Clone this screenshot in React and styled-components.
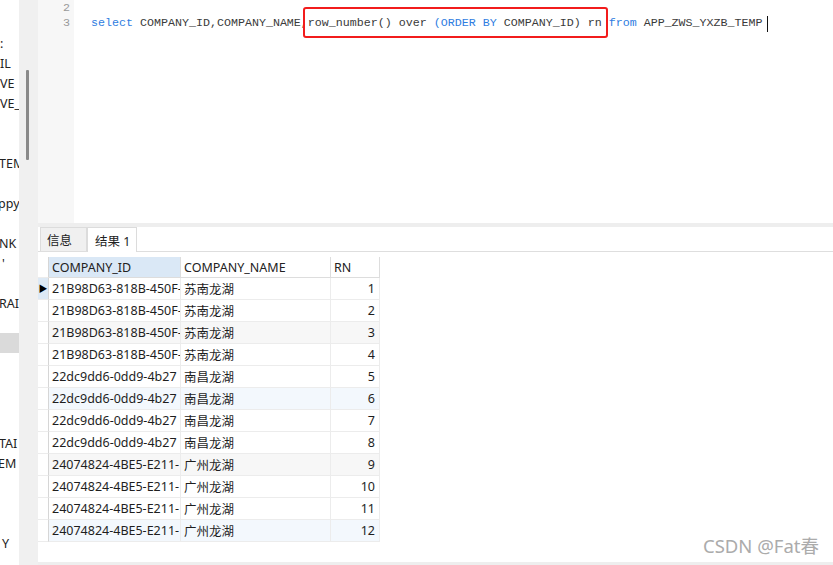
import React from 'react'
import styled, { createGlobalStyle } from 'styled-components'

const GlobalStyle = createGlobalStyle`
  html, body {
    margin: 0;
    padding: 0;
    background: #ffffff;
    overflow: hidden;
  }
  * { box-sizing: border-box; }
`

const UI_FONT = `"Noto Sans", "Noto Sans CJK SC", sans-serif`
const CODE_FONT = `"Liberation Mono", "DejaVu Sans Mono", monospace`

const Pantalla = styled.div`
  width: 833px;
  height: 565px;
  display: flex;
  position: relative;
  font-family: ${UI_FONT};
  color: #222;
  overflow: hidden;
`

const Sidebar = styled.ul`
  width: 19px;
  margin: 0;
  padding: 33px 0 0;
  list-style: none;
  overflow: hidden;
  background: #fff;
`

const SidebarItem = styled.li`
  height: 20px;
  display: flex;
  align-items: center;
  white-space: nowrap;
  font-size: 12.5px;
  color: #222;
  background: ${p => (p.$activo ? '#dadada' : 'transparent')};
`

const Fragmento = styled.span`
  margin-left: ${p => p.$desfase || 0}px;
`

const Separador = styled.div`
  width: 19px;
  background: #f0f0f0;
  padding: 70px 0 0 7px;
`

const ScrollThumb = styled.div`
  width: 3px;
  height: 90px;
  background: #8a8a8a;
  border-radius: 1px;
`

const Principal = styled.div`
  flex: 1;
  display: flex;
  flex-direction: column;
  min-width: 0;
`

const Editor = styled.div`
  height: 223px;
  display: flex;
  background: #fff;
  position: relative;
`

const Gutter = styled.div`
  width: 36px;
  background: #f7f7f7;
  padding: 1px 4px 0 0;
  font-family: ${CODE_FONT};
  font-size: 11.7px;
  line-height: 15px;
  color: #9a9a9a;
`

const Codigo = styled.div`
  flex: 1;
  padding: 1px 0 0 17px;
  font-family: ${CODE_FONT};
  font-size: 11.67px;
  line-height: 15px;
  color: #3a3a3a;
  white-space: pre;
  position: relative;
`

const Linea = styled.div`
  height: 15px;
  display: flex;
  align-items: center;
  justify-content: ${p => (p.$numero ? 'flex-end' : 'flex-start')};
`

const Keyword = styled.span`
  color: #2f7de1;
`

const Cursor = styled.span`
  display: inline-block;
  width: 1px;
  height: 16px;
  background: #111;
  margin-left: 4px;
`

const Resaltado = styled.div`
  position: absolute;
  left: 229px;
  top: 7px;
  width: 305px;
  height: 31px;
  border: 2px solid #f21c1c;
  border-radius: 3px;
  pointer-events: none;
`

const Divisor = styled.div`
  height: 4px;
  background: #eeeeee;
`

const Pestanas = styled.div`
  height: 25px;
  display: flex;
  align-items: flex-end;
  padding-left: 2px;
  border-bottom: 1px solid #dedede;
`

const Pestana = styled.div`
  width: ${p => p.$ancho}px;
  height: ${p => (p.$activa ? 25 : 24)}px;
  display: flex;
  align-items: center;
  padding-left: ${p => (p.$activa ? 7 : 6)}px;
  font-size: 12.5px;
  color: #222;
  background: ${p => (p.$activa ? '#ffffff' : '#f0f0f0')};
  border: 1px solid #dcdcdc;
  border-bottom: none;
  margin-bottom: ${p => (p.$activa ? '-1px' : '0')};
`

const ZonaResultados = styled.div`
  flex: 1;
  padding-top: 5px;
  background: #fff;
  position: relative;
`

const Tabla = styled.div`
  display: grid;
  grid-template-columns: 11px 132px 150px 49px;
  grid-template-rows: 21px;
  grid-auto-rows: 22px;
  width: 342px;
  font-size: 12.5px;
`

const Encabezado = styled.div`
  display: flex;
  align-items: center;
  padding-left: 3px;
  background: ${p => (p.$seleccionada ? '#dae8f6' : '#ffffff')};
  border-right: 1px solid #dddddd;
  border-bottom: 1px solid #dddddd;
  white-space: nowrap;
  overflow: hidden;
`

const Celda = styled.div`
  display: flex;
  align-items: center;
  justify-content: ${p => (p.$numero ? 'flex-end' : 'flex-start')};
  padding: ${p => (p.$numero ? '0 4px 0 0' : '0 0 0 3px')};
  background: ${p => p.$fondo};
  border-right: 1px solid #ececec;
  border-bottom: 1px solid #ececec;
  white-space: nowrap;
  overflow: hidden;
  color: #1e1e1e;
`

const Indicador = styled.div`
  display: flex;
  align-items: center;
  justify-content: center;
  background: ${p => (p.$actual ? '#dde9f5' : '#ffffff')};
  border-right: 1px solid #d6d6d6;
  border-bottom: 1px solid #ececec;
  font-size: 9px;
  color: #000;
`

const BordeInferior = styled.div`
  position: absolute;
  left: 0;
  right: 0;
  bottom: 0;
  height: 3px;
  background: #eeeeee;
`

const MarcaAgua = styled.div`
  position: absolute;
  right: 14px;
  bottom: 7px;
  font-family: ${UI_FONT};
  font-size: 18.5px;
  color: #ababab;
  text-shadow: 0 0 1px #fff;
`

// solo se ve el final de cada nombre: el panel está recortado
const tablasSidebar = [
  { nombre: ':', desfase: 0 },
  { nombre: 'IL', desfase: 0 },
  { nombre: 'VE', desfase: 0 },
  { nombre: 'VE_', desfase: 0 },
  { nombre: '' },
  { nombre: '' },
  { nombre: 'TEM', desfase: -1 },
  { nombre: '' },
  { nombre: 'ppy', desfase: -2 },
  { nombre: '' },
  { nombre: 'NK', desfase: -1 },
  { nombre: "'", desfase: 2 },
  { nombre: '' },
  { nombre: 'RAI', desfase: -1 },
  { nombre: '' },
  { nombre: '', activo: true },
  { nombre: '' },
  { nombre: '' },
  { nombre: '' },
  { nombre: '' },
  { nombre: 'TAI', desfase: -1 },
  { nombre: 'EM', desfase: -2 },
  { nombre: '' },
  { nombre: '' },
  { nombre: '' },
  { nombre: 'Y', desfase: 2 },
]

const filas = [
  { id: '21B98D63-818B-450F-', nombre: '苏南龙湖', rn: 1 },
  { id: '21B98D63-818B-450F-', nombre: '苏南龙湖', rn: 2 },
  { id: '21B98D63-818B-450F-', nombre: '苏南龙湖', rn: 3 },
  { id: '21B98D63-818B-450F-', nombre: '苏南龙湖', rn: 4 },
  { id: '22dc9dd6-0dd9-4b27', nombre: '南昌龙湖', rn: 5 },
  { id: '22dc9dd6-0dd9-4b27', nombre: '南昌龙湖', rn: 6 },
  { id: '22dc9dd6-0dd9-4b27', nombre: '南昌龙湖', rn: 7 },
  { id: '22dc9dd6-0dd9-4b27', nombre: '南昌龙湖', rn: 8 },
  { id: '24074824-4BE5-E211-', nombre: '广州龙湖', rn: 9 },
  { id: '24074824-4BE5-E211-', nombre: '广州龙湖', rn: 10 },
  { id: '24074824-4BE5-E211-', nombre: '广州龙湖', rn: 11 },
  { id: '24074824-4BE5-E211-', nombre: '广州龙湖', rn: 12 },
]

// cada 3 filas hay un fondo alterno: gris y luego azul
const fondoFila = (i) => {
  const n = (i + 1) % 6
  if (n === 3) return '#f7f7f7'
  if (n === 0) return '#f3f8fd'
  return '#ffffff'
}

const App = () => {
  return (
    <>
      <GlobalStyle />
      <Pantalla>
        <Sidebar>
          {tablasSidebar.map((t, i) => (
            <SidebarItem key={i} $activo={t.activo}>
              <Fragmento $desfase={t.desfase}>{t.nombre}</Fragmento>
            </SidebarItem>
          ))}
        </Sidebar>

        <Separador>
          <ScrollThumb />
        </Separador>

        <Principal>
          <Editor>
            <Gutter>
              <Linea $numero>2</Linea>
              <Linea $numero>3</Linea>
            </Gutter>
            <Codigo>
              <Linea> </Linea>
              <Linea>
                <Keyword>select</Keyword>{' COMPANY_ID,COMPANY_NAME,row_number() over '}
                <Keyword>(ORDER BY</Keyword>{' COMPANY_ID) rn '}
                <Keyword>from</Keyword>{' APP_ZWS_YXZB_TEMP'}
                <Cursor />
              </Linea>
              <Resaltado />
            </Codigo>
          </Editor>

          <Divisor />

          <Pestanas>
            <Pestana $ancho={47}>信息</Pestana>
            <Pestana $ancho={50} $activa>结果 1</Pestana>
          </Pestanas>

          <ZonaResultados>
            <Tabla>
              <Indicador />
              <Encabezado $seleccionada>COMPANY_ID</Encabezado>
              <Encabezado>COMPANY_NAME</Encabezado>
              <Encabezado>RN</Encabezado>
              {filas.map((f, i) => (
                <React.Fragment key={f.rn}>
                  <Indicador $actual={i === 0}>{i === 0 ? '▶' : ''}</Indicador>
                  <Celda $fondo={fondoFila(i)}>{f.id}</Celda>
                  <Celda $fondo={fondoFila(i)}>{f.nombre}</Celda>
                  <Celda $fondo={fondoFila(i)} $numero>{f.rn}</Celda>
                </React.Fragment>
              ))}
            </Tabla>
            <BordeInferior />
          </ZonaResultados>
        </Principal>

        <MarcaAgua>CSDN @Fat春</MarcaAgua>
      </Pantalla>
    </>
  )
}

export default App
